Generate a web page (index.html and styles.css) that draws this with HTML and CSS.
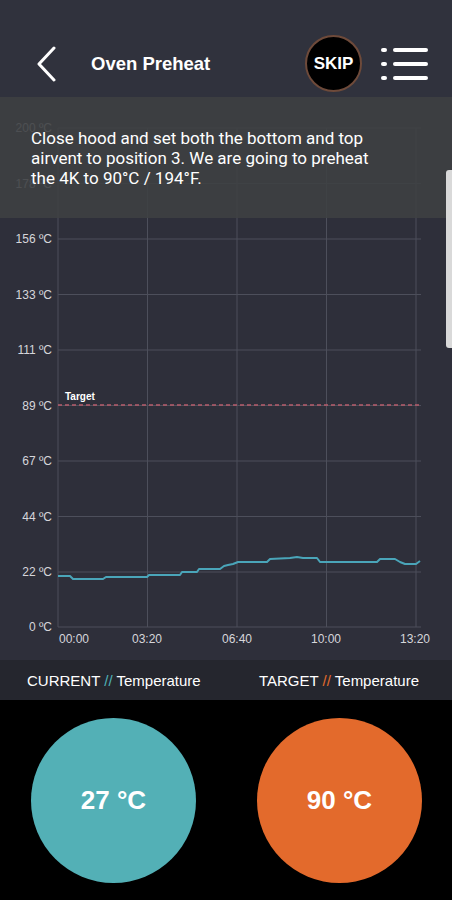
FILE: index.html
```html
<!DOCTYPE html>
<html>
<head>
<title>Oven Preheat</title>
<link rel="stylesheet" href="styles.css">
</head>
<body>
<div class="screen">
  <header class="topbar">
    <svg class="back" width="20" height="36" viewBox="0 0 20 36">
      <polyline points="17,2 2,18 17,34" fill="none" stroke="#fff" stroke-width="3" stroke-linecap="round" stroke-linejoin="round"/>
    </svg>
    <h1 class="title">Oven Preheat</h1>
    <div class="skip">SKIP</div>
    <div class="menu">
      <div class="menu-row"><span class="dot"></span><span class="bar"></span></div>
      <div class="menu-row"><span class="dot"></span><span class="bar"></span></div>
      <div class="menu-row"><span class="dot"></span><span class="bar"></span></div>
    </div>
  </header>

  <section class="chart">
    <svg class="plot" width="452" height="563" viewBox="0 97 452 563">
      <g stroke="#4d4f5b" stroke-width="1">
        <line x1="58" y1="128" x2="421" y2="128"/>
        <line x1="58" y1="183.5" x2="421" y2="183.5"/>
        <line x1="58" y1="239" x2="421" y2="239"/>
        <line x1="58" y1="294.5" x2="421" y2="294.5"/>
        <line x1="58" y1="350" x2="421" y2="350"/>
        <line x1="58" y1="405.5" x2="421" y2="405.5"/>
        <line x1="58" y1="461" x2="421" y2="461"/>
        <line x1="58" y1="516.5" x2="421" y2="516.5"/>
        <line x1="58" y1="572" x2="421" y2="572"/>
        <line x1="58" y1="627" x2="421" y2="627"/>
        <line x1="58" y1="128" x2="58" y2="627"/>
        <line x1="147.5" y1="128" x2="147.5" y2="627"/>
        <line x1="237" y1="128" x2="237" y2="627"/>
        <line x1="326.5" y1="128" x2="326.5" y2="627"/>
        <line x1="416" y1="128" x2="416" y2="627"/>
      </g>
      <g class="ylabels" text-anchor="end">
        <text x="52" y="132">200 ºC</text>
        <text x="52" y="188">178 ºC</text>
        <text x="52" y="243">156 ºC</text>
        <text x="52" y="299">133 ºC</text>
        <text x="52" y="354">111 ºC</text>
        <text x="52" y="410">89 ºC</text>
        <text x="52" y="465">67 ºC</text>
        <text x="52" y="521">44 ºC</text>
        <text x="52" y="576">22 ºC</text>
        <text x="52" y="631">0 ºC</text>
      </g>
      <g class="xlabels" text-anchor="middle">
        <text x="74" y="643">00:00</text>
        <text x="147" y="643">03:20</text>
        <text x="237" y="643">06:40</text>
        <text x="326" y="643">10:00</text>
        <text x="415" y="643">13:20</text>
      </g>
      <line x1="58" y1="405" x2="421" y2="405" stroke="#b85d6c" stroke-width="1.3" stroke-dasharray="4 3"/>
      <text class="target-label" x="65" y="400">Target</text>
      <polyline fill="none" stroke="#4aa5b9" stroke-width="2" stroke-linejoin="round"
        points="58,576 70,576 73,579 103,579 106,577 147,577 149,575 180,575 182,572 197,572 199,569 220,569 224,566 228,565 233,564 238,562 267,562 270,559 290,558 297,557 303,558 317,558 320,562 377,562 380,559 395,559 400,562 405,564 416,564 420,561"/>
    </svg>
    <div class="notice">Close hood and set both the bottom and top airvent to position 3. We are going to preheat the 4K to 90°C / 194°F.</div>
    <div class="scrollbar"></div>
  </section>

  <div class="legend">
    <span>CURRENT <em class="teal">//</em> Temperature</span>
    <span>TARGET <em class="orange">//</em> Temperature</span>
  </div>

  <section class="readouts">
    <div class="reading current">27 °C</div>
    <div class="reading target">90 °C</div>
  </section>
</div>
</body>
</html>
```
FILE: styles.css
```css
body {
margin: 0;
padding: 0;
background-color: #000;
font-family: "Liberation Sans", Arial, sans-serif;
color: #fff;
}
.screen {
width: 452px;
height: 900px;
overflow: hidden;
}
.topbar {
height: 97px;
display: flex;
align-items: center;
padding: 30px 24px 0 37px;
box-sizing: border-box;
background-color: #30323d;
}
.back {
display: block;
}
.title {
margin: 0 0 0 34px;
font-size: 18.5px;
font-weight: bold;
}
.skip {
margin-left: auto;
width: 53px;
height: 53px;
border-radius: 50%;
background-color: #000;
border: 2px solid #6e4a3a;
display: flex;
align-items: center;
justify-content: center;
font-size: 17px;
font-weight: bold;
}
.menu {
margin-left: 19px;
display: flex;
flex-direction: column;
gap: 10px;
}
.menu-row {
display: flex;
align-items: center;
gap: 6px;
}
.dot {
width: 6px;
height: 4px;
border-radius: 2px;
background-color: #fff;
}
.bar {
width: 35px;
height: 4px;
border-radius: 2px;
background-color: #fff;
}
.chart {
position: relative;
height: 563px;
background-color: #2e2f3a;
}
.plot {
display: block;
}
.ylabels text, .xlabels text {
font-size: 12px;
fill: #d6d6da;
}
.target-label {
font-size: 10px;
font-weight: bold;
fill: #fff;
}
.notice {
position: absolute;
top: 0;
left: 0;
right: 0;
height: 121px;
box-sizing: border-box;
padding: 31px 58px 0 31px;
background-color: rgba(62, 64, 66, 0.9);
font-family: Roboto, "Liberation Sans", sans-serif;
font-size: 17px;
line-height: 20px;
}
.scrollbar {
position: absolute;
right: 0;
top: 73px;
width: 6px;
height: 178px;
border-radius: 3px 0 0 3px;
background-color: #d9d9d9;
}
.legend {
height: 40px;
display: flex;
align-items: center;
justify-content: space-between;
padding: 0 33px 0 27px;
background-color: #25262e;
font-size: 15px;
}
.legend em {
font-style: normal;
}
.teal {
color: #4fb0b6;
}
.orange {
color: #e36b2c;
}
.readouts {
display: flex;
gap: 61px;
padding: 18px 0 0 31px;
}
.reading {
width: 165px;
height: 165px;
border-radius: 50%;
display: flex;
align-items: center;
justify-content: center;
font-size: 26px;
font-weight: bold;
}
.current {
background-color: #53b0b6;
}
.target {
background-color: #e36a2c;
}
```
